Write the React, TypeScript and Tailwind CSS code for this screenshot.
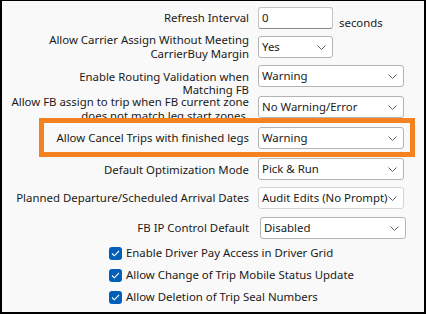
import React from 'react'

const font = { fontFamily: '"Noto Sans", "Open Sans", sans-serif' }

function Chevron() {
  return (
    <svg width="9" height="5" viewBox="0 0 9 5" className="shrink-0">
      <path d="M0.5 0.5 L4.5 4.5 L8.5 0.5" fill="none" stroke="#606060" strokeWidth="1" />
    </svg>
  )
}

function Select({ value, wide = true, light = false }: { value: string; wide?: boolean; light?: boolean }) {
  return (
    <div
      className={`flex h-[22px] shrink-0 items-center overflow-hidden rounded-[3px] border bg-white pl-[3px] pr-[6px] ${
        wide ? 'w-[146px]' : 'w-[75px]'
      } ${light ? 'border-[#d4d4d4]' : 'border-[#b4b4b4]'}`}
    >
      <span className="flex-1 overflow-hidden whitespace-nowrap">{value}</span>
      <Chevron />
    </div>
  )
}

function Row({
  mt,
  label,
  children,
  top = false,
  shift = '',
}: {
  mt: string
  label: React.ReactNode
  children: React.ReactNode
  top?: boolean
  shift?: string
}) {
  return (
    <div className={`flex h-[22px] ${mt}`}>
      <div
        className={`flex h-[22px] w-[256px] shrink-0 justify-end whitespace-nowrap pr-[9px] text-right ${
          top ? 'items-start pt-[5px] leading-[13px]' : 'items-center leading-[14px]'
        }`}
      >
        <div className={shift}>{label}</div>
      </div>
      {children}
    </div>
  )
}

function Check({ label, mt }: { label: string; mt: string }) {
  return (
    <div className={`flex h-[22px] items-center gap-[4px] whitespace-nowrap pl-[107px] ${mt}`}>
      <div className="flex h-[13px] w-[13px] shrink-0 items-center justify-center rounded-[3px] bg-[#005fb8]">
        <svg width="9" height="7" viewBox="0 0 9 7">
          <path d="M1 3.5 L3.3 5.8 L8 1" fill="none" stroke="white" strokeWidth="1.1" />
        </svg>
      </div>
      <span>{label}</span>
    </div>
  )
}

export default function App() {
  return (
    <div
      style={font}
      className="relative h-[314px] w-[426px] overflow-hidden border-b-2 border-l-2 border-r-2 border-t border-black bg-[#f9f9f9] text-[11.4px] text-[#1a1a1a]"
    >
      <Row mt="mt-[6px]" label="Refresh Interval">
        <div className="flex h-[22px] w-[75px] shrink-0 items-center rounded-[3px] border border-[#c4c4c4] border-b-[#8a8a8a] bg-white pl-[3px]">
          0
        </div>
        <span className="ml-[6px] mt-[7px] whitespace-nowrap">seconds</span>
      </Row>

      <Row
        mt="mt-[7px]"
        label={
          <>
            Allow Carrier Assign Without Meeting
            <br />
            CarrierBuy Margin
          </>
        }
      >
        <Select value="Yes" wide={false} />
      </Row>

      <Row
        mt="mt-[7px]"
        top
        label={
          <>
            Enable Routing Validation when
            <br />
            Matching FB
          </>
        }
      >
        <Select value="Warning" />
      </Row>

      <Row
        mt="mt-[9px]"
        shift="translate-y-[2px]"
        label={
          <>
            Allow FB assign to trip when FB current zone
            <br />
            does not match leg start zones.
          </>
        }
      >
        <Select value="No Warning/Error" />
      </Row>

      <Row mt="mt-[9px]" label="Allow Cancel Trips with finished legs">
        <Select value="Warning" />
      </Row>

      <Row mt="mt-[9px]" shift="translate-y-[1px]" label="Default Optimization Mode">
        <Select value="Pick & Run" />
      </Row>

      <Row mt="mt-[7px]" label="Planned Departure/Scheduled Arrival Dates">
        <Select value="Audit Edits (No Prompt)" light />
      </Row>

      <Row mt="mt-[8px]" label="FB IP Control Default">
        <div className="ml-[2px]">
          <Select value="Disabled" />
        </div>
      </Row>

      <Check mt="mt-[3px]" label="Enable Driver Pay Access in Driver Grid" />
      <Check mt="mt-0" label="Allow Change of Trip Mobile Status Update" />
      <Check mt="mt-0" label="Allow Deletion of Trip Seal Numbers" />

      {/* highlight annotation */}
      <div className="pointer-events-none absolute left-[37px] top-[117px] h-[39px] w-[376px] border-[5px] border-[#f58220]" />
    </div>
  )
}
